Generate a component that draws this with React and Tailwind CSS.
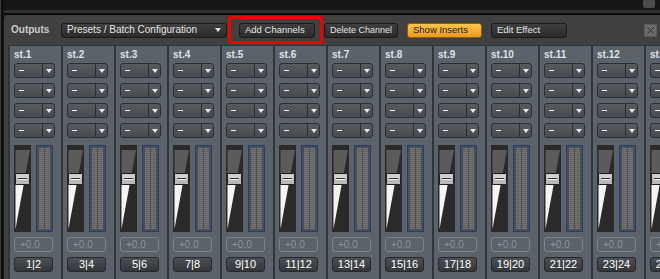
const strips = Array.from({ length: 13 }, (_, i) => ({
  name: `st.${i + 1}`,
  out: `${2 * i + 1}|${2 * i + 2}`,
}))

function ToolButton({ label, className = '' }) {
  return (
    <div
      className={`h-[15px] flex items-center pl-[5px] rounded-[3px] border border-[#191919] bg-linear-to-b from-[#3e3e3e] to-[#2b2b2b] text-[#e4e4e4] text-[9.5px] leading-none whitespace-nowrap overflow-hidden ${className}`}
    >
      {label}
    </div>
  )
}

function SlotSelect() {
  return (
    <div className="h-[15px] w-[41px] flex rounded-[3px] border border-[#2b2e31] bg-linear-to-b from-[#575b60] to-[#474b4f]">
      <div className="flex-1 flex items-center pl-[4px]">
        <div className="w-[5px] h-[1px] bg-[#f0f0f0]" />
      </div>
      <div className="w-[12px] border-l border-[#2b2e31] flex items-center justify-center">
        <svg width="6" height="4" viewBox="0 0 6 4">
          <path d="M0 0h6L3 4z" fill="#e8e8e8" />
        </svg>
      </div>
    </div>
  )
}

function Fader() {
  // wedge: (1.5,5) top-left, (16,5) top-right, (1.5,84) tip
  const xAt = (y) => 16 - (14.5 * (y - 5)) / 79
  return (
    <svg width="17" height="87" viewBox="0 0 17 87">
      <rect x="0" y="0" width="17" height="87" fill="#2a2a2a" />
      <polygon points={`1.5,5 16,5 ${xAt(28)},28 1.5,28`} fill="#5b5b5b" />
      <polygon points={`1.5,40 ${xAt(40)},40 1.5,84`} fill="#f4f4f4" />
      <rect x="1.5" y="28.5" width="14" height="11" rx="1" fill="#b9b9b9" stroke="#1e1e1e" />
      <rect x="2.5" y="29.5" width="12" height="4" fill="#d2d2d2" />
      <line x1="4" y1="33.5" x2="13" y2="33.5" stroke="#2e2e2e" />
      <line x1="4" y1="34.5" x2="13" y2="34.5" stroke="#f2f2f2" />
    </svg>
  )
}

function Meter() {
  return (
    <div className="w-[17px] h-[87px] border border-[#21406a] bg-[#4b4f53] p-[2px] flex gap-[1px]">
      <div className="flex-1 bg-[repeating-linear-gradient(to_bottom,#747474_0px,#747474_1px,#626262_1px,#626262_2px)]" />
      <div className="flex-1 bg-[repeating-linear-gradient(to_bottom,#747474_0px,#747474_1px,#626262_1px,#626262_2px)]" />
    </div>
  )
}

function Strip({ name, out }) {
  return (
    <div className="w-[53px] shrink-0 border-l-[2px] border-[#30353a] bg-[#5b626a] pl-[4px] flex flex-col">
      <div className="h-[17px] flex items-center text-[10px] font-bold leading-none text-[#dde2e7] whitespace-nowrap">
        {name}
      </div>
      <div className="flex flex-col gap-[5px]">
        <SlotSelect />
        <SlotSelect />
        <SlotSelect />
        <SlotSelect />
      </div>
      <div className="mt-[7px] flex gap-[5px]">
        <Fader />
        <Meter />
      </div>
      <div className="mt-[5px] w-[39px] h-[15px] rounded-[3px] border border-[#7d848b] flex items-center pl-[5px] text-[10px] leading-none text-[#8d949b]">
        +0.0
      </div>
      <div className="mt-[5px] w-[39px] h-[15px] rounded-[3px] border border-[#25292c] bg-linear-to-b from-[#4c5054] to-[#33373a] flex items-center justify-center text-[11px] leading-none text-white">
        {out}
      </div>
    </div>
  )
}

export default function App() {
  return (
    <div className="w-[660px] h-[279px] overflow-hidden flex bg-[#101010] font-['Liberation_Sans',Arial,sans-serif]">
      <div className="w-[1px] bg-[#3a3a3a]" />
      <div className="w-[3px]" />
      <div className="flex-1 min-w-0 flex flex-col bg-[#2e2e2e]">
        <div className="h-[10px] flex bg-[#101010]">
          <div className="flex-1 bg-[#171717] rounded-bl-[5px] flex justify-end">
            <div className="w-[12px] h-[8px] mr-[5px] rounded-b-[2px] bg-[#4b4b4b]" />
          </div>
        </div>
        <div className="h-[3px] bg-[#2f2f2f]" />
        <div className="h-[2px] bg-[#0c0c0c]" />
        <div className="flex-1 min-h-0 bg-[#404040] rounded-tl-[5px] flex flex-col">
          <div className="h-[30px] shrink-0 flex items-center pl-[7px]">
            <div className="w-[50px] text-[10px] font-bold text-[#cbcbcb] leading-none">Outputs</div>
            <div className="w-[166px] h-[15px] flex items-center justify-between pl-[5px] pr-[5px] rounded-[3px] border border-[#191919] bg-linear-to-b from-[#3e3e3e] to-[#2b2b2b] text-[#e4e4e4] text-[10px] leading-none">
              <span>Presets / Batch Configuration</span>
              <svg width="6" height="4" viewBox="0 0 6 4">
                <path d="M0 0h6L3 4z" fill="#e8e8e8" />
              </svg>
            </div>
            <div className="ml-[1px] w-[95px] h-[28px] border-[3px] border-[#ee0000] flex items-center pl-[8px]">
              <ToolButton label="Add Channels" className="w-[76px]" />
            </div>
            <ToolButton label="Delete Channel" className="ml-[1px] w-[74px] pl-[3px] text-[9px]" />
            <div className="ml-[9px] w-[75px] h-[15px] flex items-center pl-[5px] rounded-[3px] border border-[#8f5e12] bg-linear-to-b from-[#ffc64a] to-[#e99a1a] text-[#1b1b1b] text-[9.5px] leading-none">
              Show Inserts
            </div>
            <ToolButton label="Edit Effect" className="ml-[9px] w-[76px]" />
            <div className="ml-auto mr-[3px] w-[13px] h-[13px] bg-[#6b6b6b] border border-[#5a5a5a] flex items-center justify-center">
              <svg width="7" height="7" viewBox="0 0 7 7">
                <path d="M0.5 0.5L6.5 6.5M6.5 0.5L0.5 6.5" stroke="#2f2f2f" strokeWidth="1" />
              </svg>
            </div>
          </div>
          <div className="flex-1 min-h-0 ml-[4px] flex border-t border-[#30353a] overflow-hidden">
            {strips.map((s) => (
              <Strip key={s.name} {...s} />
            ))}
          </div>
        </div>
      </div>
    </div>
  )
}
